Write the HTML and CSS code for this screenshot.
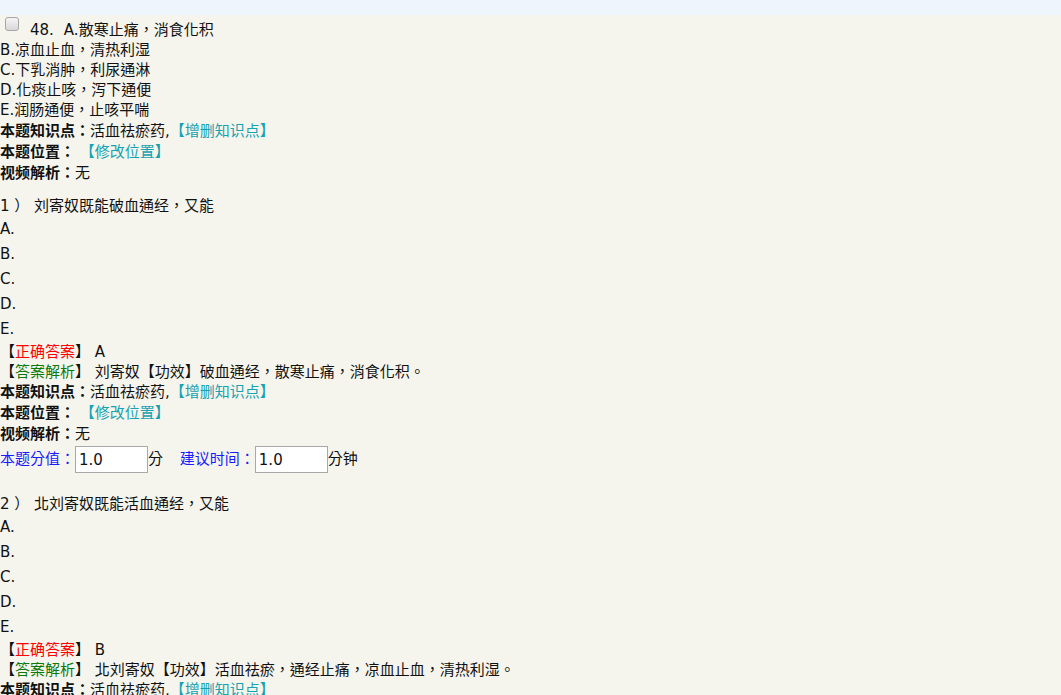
FILE: index.html
```html
<!DOCTYPE html>
<html lang="zh-Hant">
<head>
    <meta charset="UTF-8">
    <title>试题</title>
    <link rel="stylesheet" href="styles.css">
</head>
<body>
    <div class="top-bar"></div>

    <div class="question-block">
        <div class="stem">
            <input type="checkbox" class="pick"><span class="num">48.</span>A.散寒止痛，消食化积
        </div>
        <div class="line">B.凉血止血，清热利湿</div>
        <div class="line">C.下乳消肿，利尿通淋</div>
        <div class="line">D.化痰止咳，泻下通便</div>
        <div class="line">E.润肠通便，止咳平喘</div>
        <div class="info first-info"><b>本题知识点：</b>活血祛瘀药,<a class="link">【增删知识点】</a></div>
        <div class="info"><b>本题位置：</b> <a class="link">【修改位置】</a></div>
        <div class="info"><b>视频解析：</b>无</div>

        <div class="sub">
            <div class="sub-title">1 ） 刘寄奴既能破血通经，又能</div>
            <div class="opt">A.</div>
            <div class="opt">B.</div>
            <div class="opt">C.</div>
            <div class="opt">D.</div>
            <div class="opt">E.</div>
            <div class="answer">【<span class="red">正确答案</span>】 A</div>
            <div class="line">【<span class="green">答案解析</span>】 刘寄奴【功效】破血通经，散寒止痛，消食化积。</div>
            <div class="info"><b>本题知识点：</b>活血祛瘀药,<a class="link">【增删知识点】</a></div>
            <div class="info"><b>本题位置：</b> <a class="link">【修改位置】</a></div>
            <div class="info"><b>视频解析：</b>无</div>
            <div class="score-row">
                <span class="blue">本题分值：</span><input type="text" class="num-input" value="1.0"><span>分</span>
                <span class="blue gap">建议时间：</span><input type="text" class="num-input" value="1.0"><span>分钟</span>
            </div>
        </div>

        <div class="sub second">
            <div class="sub-title">2 ） 北刘寄奴既能活血通经，又能</div>
            <div class="opt">A.</div>
            <div class="opt">B.</div>
            <div class="opt">C.</div>
            <div class="opt">D.</div>
            <div class="opt">E.</div>
            <div class="answer">【<span class="red">正确答案</span>】 B</div>
            <div class="line">【<span class="green">答案解析</span>】 北刘寄奴【功效】活血祛瘀，通经止痛，凉血止血，清热利湿。</div>
            <div class="info"><b>本题知识点：</b>活血祛瘀药,<a class="link">【增删知识点】</a></div>
        </div>
    </div>
</body>
</html>
```

FILE: styles.css
```css
*{
    box-sizing: border-box;
}

body{
    margin: 0;
    background-color: #f5f5ee;
    color: #111;
    font-family: Verdana, "DejaVu Sans", "Noto Sans CJK TC", sans-serif;
    font-size: 15px;
    overflow: hidden;
}

.top-bar{
    height: 15px;
    background-color: #eef5fd;
}

.question-block{
    padding-top: 5px;
}

.stem{
    height: 20px;
    line-height: 20px;
}

.pick{
    appearance: none;
    -webkit-appearance: none;
    width: 14px;
    height: 14px;
    margin: -3px 0 0 5px;
    border: 1px solid #a6a6a6;
    border-radius: 3px;
    background: linear-gradient(#f4f4f4, #d8d8d8);
    vertical-align: top;
}

.num{
    margin-left: 11px;
    margin-right: 10px;
}

.line{
    height: 20px;
    line-height: 20px;
}

.info{
    height: 21px;
    line-height: 21px;
}

.first-info{
    margin-top: 1px;
}

.info b{
    font-weight: bold;
}

.link{
    color: #17a2b0;
    cursor: pointer;
}

.sub{
    margin-top: 12px;
}

.sub-title{
    height: 21px;
    line-height: 21px;
}

.opt{
    height: 25px;
    line-height: 25px;
}

.answer{
    height: 20px;
    line-height: 20px;
}

.red{
    color: #ff0000;
}

.green{
    color: #0b7a0b;
}

.blue{
    color: #1a1aff;
}

.gap{
    margin-left: 12px;
}

.score-row{
    height: 27px;
    line-height: 27px;
    margin-top: 1px;
}

.num-input{
    width: 73px;
    height: 27px;
    margin: 0;
    border: 1px solid #a9a9a9;
    background: #fff;
    padding: 0 3px;
    font-size: 15px;
    font-family: Verdana, "DejaVu Sans", sans-serif;
    color: #111;
    vertical-align: top;
}

.second{
    margin-top: 21px;
}
```
